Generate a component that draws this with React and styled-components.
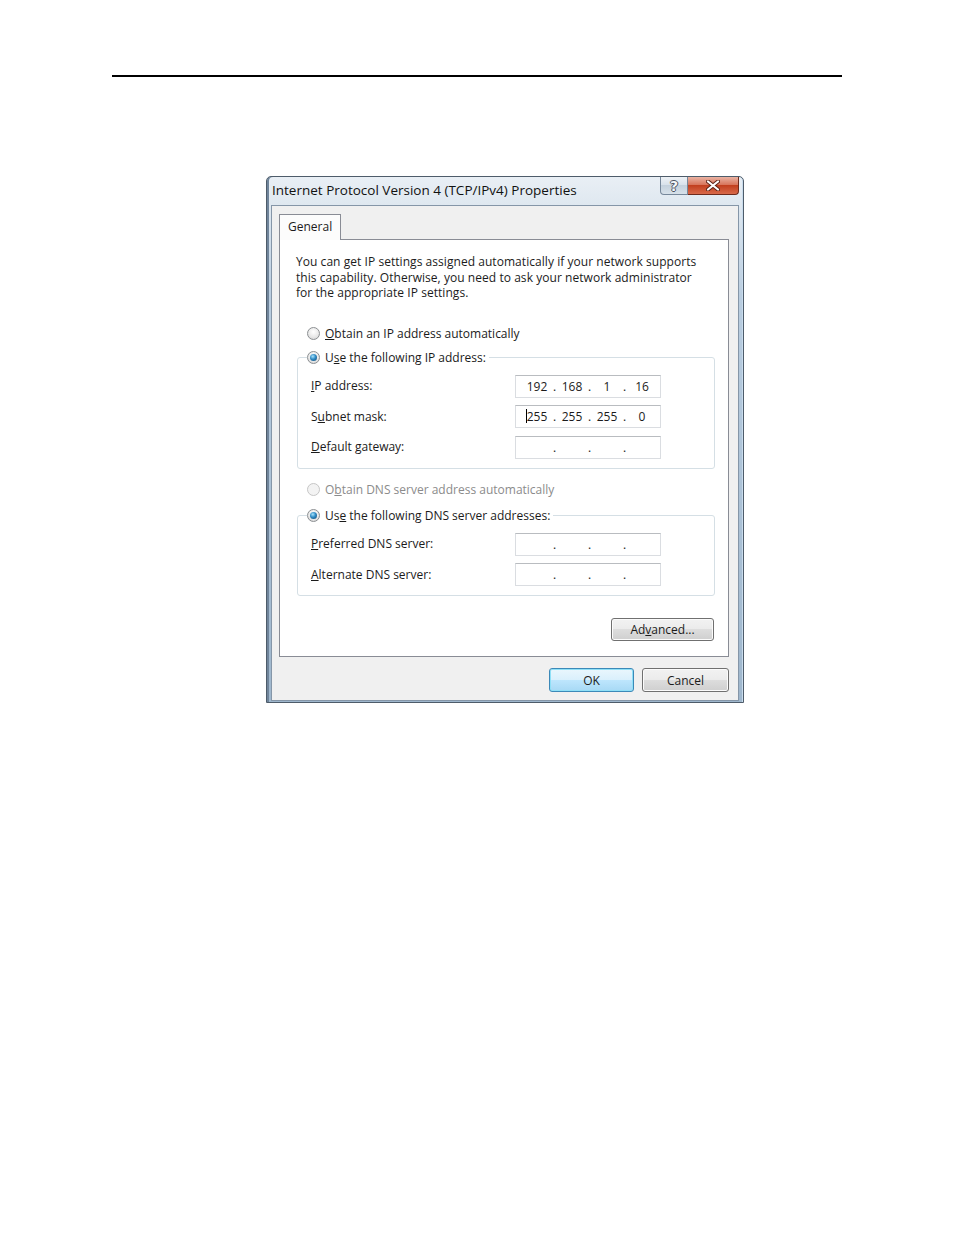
import styled, { createGlobalStyle } from "styled-components";

const GlobalStyle = createGlobalStyle`
  html, body {
    margin: 0;
    padding: 0;
    background: #fff;
  }
  body {
    font-family: "Open Sans", "Liberation Sans", sans-serif;
    color: #1b1b1b;
  }
`;

const Page = styled.div`
  width: 954px;
  min-height: 1235px;
  padding-top: 75px;
  box-sizing: border-box;
`;

const Rule = styled.div`
  width: 730px;
  height: 2px;
  margin-left: 112px;
  background: #000;
`;

const Dialog = styled.div`
  width: 478px;
  margin: 99px 0 0 266px;
  box-sizing: border-box;
  border: 1px solid #4e5c6a;
  border-radius: 5px 5px 0 0;
  background: linear-gradient(180deg, #e9eff5 0, #dfe8f0 28px, #b9cde0 120px, #9fb7cd 100%);
  box-shadow: inset 2px 0 0 #6f849a, inset -1px 0 0 #c9dced;
`;

const TitleBar = styled.div`
  display: flex;
  align-items: flex-start;
  height: 28px;
  padding: 0 4px 0 5px;
`;

const Title = styled.div`
  margin-top: 4px;
  font-size: 13.5px;
  line-height: 18px;
  color: #111;
  white-space: nowrap;
`;

const Controls = styled.div`
  display: flex;
  margin-left: auto;
`;

const CaptionButton = styled.div`
  display: flex;
  align-items: center;
  justify-content: center;
  height: 18px;
  width: ${(p) => p.$w}px;
  box-sizing: border-box;
  border: 1px solid ${(p) => (p.$close ? "#6e2a1c" : "#76879a")};
  border-top: none;
  ${(p) => (p.$close ? "border-left: none;" : "")}
  border-radius: ${(p) => (p.$close ? "0 0 4px 0" : "0 0 0 4px")};
  background: ${(p) =>
    p.$close
      ? "linear-gradient(180deg, #eab3a3 0, #d8765c 45%, #c2401f 50%, #d8694a 100%)"
      : "linear-gradient(180deg, #eef2f6 0, #d9e2eb 45%, #c4d1dd 50%, #d7e1ea 100%)"};
`;

const HelpGlyph = styled.span`
  font-family: "DejaVu Sans", sans-serif;
  font-weight: bold;
  font-size: 14px;
  line-height: 1;
  color: #f4f6f8;
  text-shadow: 1px 0 0 #4a5360, -1px 0 0 #4a5360, 0 1px 0 #4a5360, 0 -1px 0 #4a5360;
`;

const Body = styled.div`
  margin: 0 4px 1px 4px;
  background: #f0f0f0;
  border: 1px solid #8596a8;
  padding: 8px 9px 8px 7px;
`;

const Tab = styled.div`
  position: relative;
  z-index: 1;
  width: 62px;
  height: 26px;
  box-sizing: border-box;
  margin-bottom: -1px;
  padding: 4px 0 0 8px;
  border: 1px solid #898c95;
  border-bottom: none;
  background: #fcfcfc;
  font-size: 12px;
  line-height: 16px;
`;

const Panel = styled.div`
  display: flex;
  flex-direction: column;
  border: 1px solid #898c95;
  background: #fff;
  padding: 14px 13px 15px 16px;
`;

const Intro = styled.p`
  margin: 0;
  font-size: 12px;
  line-height: 15.5px;
  letter-spacing: 0.05px;
  white-space: nowrap;
`;

const RadioRow = styled.div`
  display: flex;
  align-items: center;
  gap: 5px;
  height: 18px;
  margin: ${(p) => p.$margin};
  font-size: 12px;
  color: ${(p) => (p.$disabled ? "#8b8b8b" : "#1b1b1b")};
  white-space: nowrap;
`;

const Radio = styled.span`
  display: flex;
  align-items: center;
  justify-content: center;
  width: 13px;
  height: 13px;
  box-sizing: border-box;
  border-radius: 50%;
  border: 1px solid ${(p) => (p.$disabled ? "#c6c6c6" : "#8c8f92")};
  background: ${(p) =>
    p.$disabled
      ? "#f3f3f3"
      : "radial-gradient(circle at 50% 35%, #ffffff 0, #e9e9e9 55%, #cfcfcf 100%)"};

  &::after {
    content: "";
    display: ${(p) => (p.$checked ? "block" : "none")};
    width: 7px;
    height: 7px;
    border-radius: 50%;
    background: radial-gradient(circle at 40% 35%, #a7e3fb 0, #2f8ac4 45%, #12456d 100%);
  }
`;

const Key = styled.span`
  text-decoration: underline;
`;

const Group = styled.fieldset`
  margin: ${(p) => p.$margin};
  padding: 8px 52px 9px 13px;
  border: 1px solid #d5dfe5;
  border-radius: 3px;
  min-width: 0;
`;

const Legend = styled.legend`
  margin-left: -4px;
  padding: 0 3px 0 0;
`;

const Rows = styled.div`
  display: grid;
  grid-template-columns: 204px 146px;
  row-gap: 7.5px;
  align-items: center;
`;

const Label = styled.div`
  font-size: 12px;
  line-height: 16px;
  white-space: nowrap;
`;

const Field = styled.div`
  position: relative;
  display: flex;
  align-items: center;
  height: 23px;
  box-sizing: border-box;
  padding-left: 8px;
  border: 1px solid #dadde1;
  border-top-color: #b9bcc0;
  background: #fff;
  font-size: 12px;
`;

const Octet = styled.span`
  position: relative;
  width: 26px;
  text-align: center;
`;

const Dot = styled.span`
  width: 9px;
  text-align: center;
`;

const Caret = styled.span`
  position: absolute;
  left: 2px;
  top: 1px;
  width: 1px;
  height: 14px;
  background: #000;
`;

const ButtonRow = styled.div`
  display: flex;
  justify-content: flex-end;
  gap: 8px;
  margin: ${(p) => p.$margin || "0"};
`;

const Button = styled.div`
  display: flex;
  align-items: center;
  justify-content: center;
  width: ${(p) => p.$w}px;
  height: ${(p) => p.$h}px;
  box-sizing: border-box;
  border-radius: 3px;
  font-size: 12px;
  color: #1b1b1b;
  border: 1px solid ${(p) => (p.$default ? "#3c89b8" : "#707070")};
  background: ${(p) =>
    p.$default
      ? "linear-gradient(180deg, #eaf6fd 0, #d9f0fc 50%, #bee6fd 50%, #a7d9f5 100%)"
      : "linear-gradient(180deg, #f2f2f2 0, #ebebeb 50%, #dddddd 50%, #cfcfcf 100%)"};
  box-shadow: inset 0 0 0 1px ${(p) => (p.$default ? "#8fe0f7" : "#fbfbfb")};
`;

function IpField({ values = ["", "", "", ""], caret }) {
  return (
    <Field>
      {values.map((v, i) => (
        <>
          <Octet key={"o" + i}>
            {caret && i === 0 && <Caret />}
            {v}
          </Octet>
          {i < 3 && <Dot key={"d" + i}>.</Dot>}
        </>
      ))}
    </Field>
  );
}

function CloseIcon() {
  return (
    <svg width="14" height="11" viewBox="0 0 14 11">
      <path d="M2 1.5 L12 9.5 M12 1.5 L2 9.5" stroke="#5a2216" strokeWidth="4" strokeLinecap="round" />
      <path d="M2 1.5 L12 9.5 M12 1.5 L2 9.5" stroke="#ffffff" strokeWidth="2.2" strokeLinecap="round" />
    </svg>
  );
}

export default function App() {
  return (
    <Page>
      <GlobalStyle />
      <Rule />
      <Dialog>
        <TitleBar>
          <Title>Internet Protocol Version 4 (TCP/IPv4) Properties</Title>
          <Controls>
            <CaptionButton $w={28}>
              <HelpGlyph>?</HelpGlyph>
            </CaptionButton>
            <CaptionButton $w={51} $close>
              <CloseIcon />
            </CaptionButton>
          </Controls>
        </TitleBar>
        <Body>
          <Tab>General</Tab>
          <Panel>
            <Intro>
              You can get IP settings assigned automatically if your network supports
              <br />
              this capability. Otherwise, you need to ask your network administrator
              <br />
              for the appropriate IP settings.
            </Intro>

            <RadioRow $margin="24px 0 0 11px">
              <Radio />
              <span>
                <Key>O</Key>btain an IP address automatically
              </span>
            </RadioRow>

            <Group $margin="6px 0 0 1px">
              <Legend>
                <RadioRow>
                  <Radio $checked />
                  <span>
                    U<Key>s</Key>e the following IP address:
                  </span>
                </RadioRow>
              </Legend>
              <Rows>
                <Label>
                  <Key>I</Key>P address:
                </Label>
                <IpField values={["192", "168", "1", "16"]} />
                <Label>
                  S<Key>u</Key>bnet mask:
                </Label>
                <IpField values={["255", "255", "255", "0"]} caret />
                <Label>
                  <Key>D</Key>efault gateway:
                </Label>
                <IpField />
              </Rows>
            </Group>

            <RadioRow $margin="12px 0 0 11px" $disabled>
              <Radio $disabled />
              <span>
                O<Key>b</Key>tain DNS server address automatically
              </span>
            </RadioRow>

            <Group $margin="8px 0 0 1px">
              <Legend>
                <RadioRow>
                  <Radio $checked />
                  <span>
                    Us<Key>e</Key> the following DNS server addresses:
                  </span>
                </RadioRow>
              </Legend>
              <Rows>
                <Label>
                  <Key>P</Key>referred DNS server:
                </Label>
                <IpField />
                <Label>
                  <Key>A</Key>lternate DNS server:
                </Label>
                <IpField />
              </Rows>
            </Group>

            <ButtonRow $margin="22px 1px 0 0">
              <Button $w={103} $h={23}>
                Ad<Key>v</Key>anced...
              </Button>
            </ButtonRow>
          </Panel>
          <ButtonRow $margin="11px 0 0 0">
            <Button $w={85} $h={24} $default>
              OK
            </Button>
            <Button $w={87} $h={24}>
              Cancel
            </Button>
          </ButtonRow>
        </Body>
      </Dialog>
    </Page>
  );
}
